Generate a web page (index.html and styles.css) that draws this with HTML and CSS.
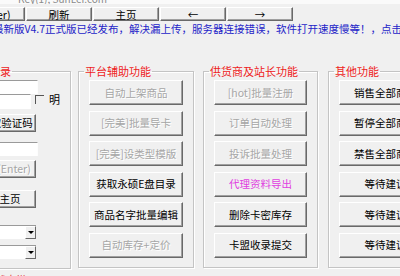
FILE: index.html
```html
<!DOCTYPE html>
<html lang="zh-CN">
<head>
<meta charset="utf-8">
<link rel="stylesheet" href="styles.css">
</head>
<body>
<div class="titlebar"><span class="title-text">Key(1), SunLei.com</span></div>
<div class="toolbar">
  <button class="tb tb-first">(Maker)</button>
  <button class="tb">刷新</button>
  <button class="tb">主页</button>
  <button class="tb">←</button>
  <button class="tb">→</button>
</div>
<div class="notice">最新版V4.7正式版已经发布，解决漏上传，服务器连接错误，软件打开速度慢等！，点击下载</div>
<div class="main">
  <fieldset class="grp grp-login">
    <legend>用户登录</legend>
    <div class="edit e1"></div>
    <div class="row">
      <div class="edit e2"></div>
      <span class="check"></span>
      <span class="check-label">明</span>
    </div>
    <button class="btn lbtn b-code">获取验证码</button>
    <div class="edit e3"></div>
    <button class="btn lbtn b-enter dis">登录(Enter)</button>
    <button class="btn lbtn b-home">进入主页</button>
    <div class="combo c1"><span class="drop"></span></div>
    <div class="combo c2"><span class="drop"></span></div>
  </fieldset>
  <fieldset class="grp grp-2">
    <legend>平台辅助功能</legend>
    <button class="btn dis">自动上架商品</button>
    <button class="btn dis">[完美]批量导卡</button>
    <button class="btn dis">[完美]设类型模版</button>
    <button class="btn">获取永硕E盘目录</button>
    <button class="btn">商品名字批量编辑</button>
    <button class="btn dis">自动库存+定价</button>
  </fieldset>
  <fieldset class="grp grp-3">
    <legend>供货商及站长功能</legend>
    <button class="btn dis">[hot]批量注册</button>
    <button class="btn dis">订单自动处理</button>
    <button class="btn dis">投诉批量处理</button>
    <button class="btn pink">代理资料导出</button>
    <button class="btn">删除卡密库存</button>
    <button class="btn">卡盟收录提交</button>
  </fieldset>
  <fieldset class="grp grp-4">
    <legend>其他功能</legend>
    <button class="btn">销售全部商品</button>
    <button class="btn">暂停全部商品</button>
    <button class="btn">禁售全部商品</button>
    <button class="btn">等待建议</button>
    <button class="btn">等待建议</button>
    <button class="btn">等待建议</button>
  </fieldset>
</div>
<div class="foot">状态栏</div>
</body>
</html>
```
FILE: styles.css
```css
html, body {
  margin: 0;
  padding: 0;
}
body {
  width: 400px;
  height: 276px;
  overflow: hidden;
  background: #f0f0f0;
  font-family: "Noto Sans CJK SC", "Liberation Sans", sans-serif;
  font-size: 10.5px;
  color: #000;
}
button {
  font-family: inherit;
  font-size: 10.5px;
  margin: 0;
  padding: 0;
  color: #000;
  background: #f0f0f0;
  border: 1px solid;
  border-color: #ffffff #696969 #696969 #ffffff;
  box-shadow: inset -1px -1px 0 #a0a0a0;
  line-height: 12px;
  white-space: nowrap;
  overflow: hidden;
}
.titlebar {
  height: 4px;
  overflow: hidden;
  background: #fafafa;
  display: flex;
  align-items: flex-end;
  padding-left: 18px;
}
.title-text {
  line-height: 12px;
  color: #8a8a8a;
  font-size: 10px;
  margin-bottom: -1px;
}
.toolbar {
  display: flex;
  gap: 1px;
  margin-top: 3px;
  margin-left: -41px;
  height: 14px;
}
.tb {
  width: 66px;
  height: 14px;
  flex: none;
  padding-top: 1px;
}
.notice {
  margin-top: 2px;
  margin-left: -7px;
  line-height: 12px;
  height: 12px;
  white-space: nowrap;
  color: #2424c8;
  font-size: 10.5px;
}
.main {
  display: flex;
  align-items: flex-start;
  margin-top: 29px;
}
.grp {
  margin: 0;
  padding: 2px 10px 9px 10px;
  border: 1px solid #c4c4c4;
  box-shadow: 1px 1px 0 #ffffff, inset 1px 1px 0 #ffffff;
  box-sizing: border-box;
  min-width: 0;
  display: flex;
  flex-direction: column;
  flex: none;
}
.grp legend {
  padding: 0 1px;
  margin-left: -5px;
  font-size: 11px;
  line-height: 14px;
  color: #ee1c1c;
}
.grp-login {
  width: 111px;
  margin-left: -40px;
  height: 205px;
}
.grp-2 {
  width: 116px;
  margin-left: 7px;
}
.grp-3 {
  width: 115px;
  margin-left: 9px;
}
.grp-4 {
  width: 115px;
  margin-left: 10px;
}
.btn {
  height: 25px;
  width: 100%;
  margin-bottom: 5.6px;
}
.btn:last-child {
  margin-bottom: 0;
}
.btn.dis {
  color: #a6a6a6;
  text-shadow: 1px 1px 0 #ffffff;
}
.btn.pink {
  color: #e040e0;
}
.edit {
  width: 67px;
  height: 15px;
  box-sizing: border-box;
  background: #ffffff;
  border-top: 1px solid #9a9a9a;
  border-left: 1px solid #9a9a9a;
  border-right: 1px solid #fdfdfd;
}
.row {
  display: flex;
  align-items: flex-start;
}
.check {
  width: 9px;
  height: 9px;
  box-sizing: border-box;
  border-top: 1px solid #555;
  border-left: 1px solid #555;
  margin-left: 4px;
  margin-top: 1px;
  flex: none;
}
.check-label {
  margin-left: 5px;
  font-size: 11px;
  line-height: 14px;
  margin-top: -2px;
}
.lbtn {
  width: 65px;
  height: 19px;
  margin-bottom: 0;
}
.b-code {
  margin-top: 5px;
  padding-left: 6px;
}
.e3 {
  margin-top: 10px;
}
.b-enter {
  margin-top: 4px;
}
.b-home {
  margin-top: 12px;
  padding-right: 8px;
}
.combo {
  width: 65px;
  height: 14px;
  box-sizing: border-box;
  background: #ffffff;
  border-top: 1px solid #9a9a9a;
  display: flex;
  justify-content: flex-end;
}
.c1 {
  margin-top: 17px;
}
.c2 {
  margin-top: 6px;
}
.drop {
  width: 11px;
  height: 13px;
  box-sizing: border-box;
  background: #f0f0f0;
  border: 1px solid;
  border-color: #ffffff #696969 #696969 #ffffff;
  display: flex;
  align-items: center;
  justify-content: center;
}
.drop::after {
  content: "";
  border-left: 3px solid transparent;
  border-right: 3px solid transparent;
  border-top: 3px solid #000;
}
.foot {
  margin-top: 5px;
  color: #e02020;
  font-size: 10px;
  line-height: 12px;
  margin-left: -4px;
}
```
